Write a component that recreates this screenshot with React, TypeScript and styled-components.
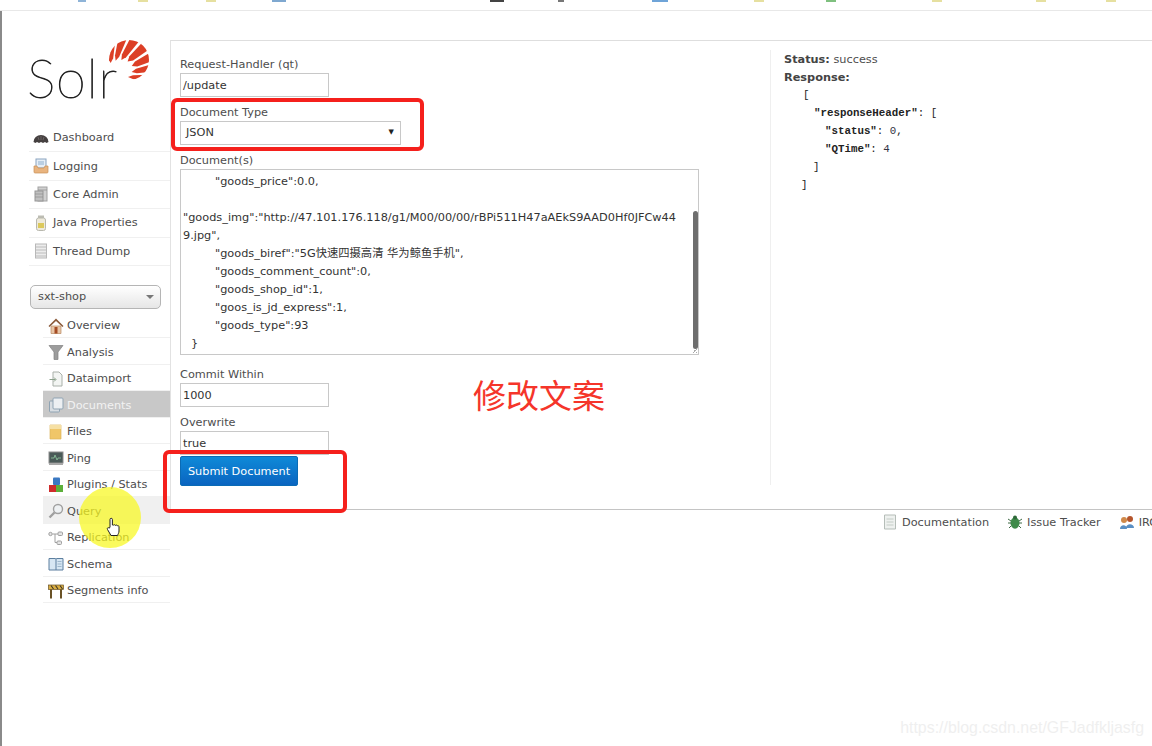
import type { ReactNode } from "react";
import styled, { createGlobalStyle } from "styled-components";

const GlobalStyle = createGlobalStyle`
  html, body {
    margin: 0;
    padding: 0;
    background: #fff;
  }
  body {
    font-family: "DejaVu Sans", "Noto Sans CJK SC", sans-serif;
    font-size: 11.3px;
    color: #4d4d4d;
  }
`;

const Screen = styled.div`
  position: relative;
  width: 1152px;
  height: 746px;
  overflow: hidden;
`;

const BookmarkBar = styled.div`
  height: 10px;
  border-bottom: 1px solid #e8e8e8;
`;

const Page = styled.div`
  display: flex;
  height: 735px;
  padding-top: 29px;
  box-sizing: border-box;
  border-left: 2px solid #8a8a8a;
`;

const Sidebar = styled.aside`
  width: 168px;
  flex: none;
  padding-left: 27px;
  box-sizing: border-box;
`;

const Logo = styled.div`
  position: relative;
  height: 62px;
  width: 125px;
`;

const LogoWord = styled.span`
  position: absolute;
  left: -2px;
  top: 9px;
  font-family: "Lato", sans-serif;
  font-weight: 100;
  font-size: 54px;
  line-height: 58px;
  letter-spacing: 0.8px;
  color: #222;
  -webkit-text-stroke: 0.8px #222;
`;

const LogoSun = styled.svg`
  position: absolute;
  left: 79px;
  top: -1px;
`;

const MainNav = styled.nav`
  margin-top: 22px;
`;

const MainItem = styled.div`
  display: flex;
  align-items: center;
  gap: 4px;
  height: 28.4px;
  padding-left: 4px;
  border-bottom: 1px solid #f0f0f0;
  box-sizing: border-box;
  color: #4d4d4d;
`;

const CoreSelect = styled.div`
  display: flex;
  align-items: center;
  justify-content: space-between;
  width: 131px;
  height: 24px;
  margin: 19px 0 3px 1px;
  padding: 0 6px 0 7px;
  box-sizing: border-box;
  border: 1px solid #b5b5b5;
  border-radius: 5px;
  background: linear-gradient(#ffffff, #e6e6e6);
`;

const CoreArrow = styled.span`
  width: 0;
  height: 0;
  border-left: 4px solid transparent;
  border-right: 4px solid transparent;
  border-top: 4px solid #777;
`;

const CoreNav = styled.nav`
  margin-left: 14px;
`;

const CoreItem = styled.div<{ $state?: "active" | "hover" }>`
  display: flex;
  align-items: center;
  gap: 3px;
  height: 26.5px;
  padding: 2px 0 0 5px;
  box-sizing: border-box;
  border-bottom: 1px solid #f0f0f0;
  background: ${(p) =>
    p.$state === "active" ? "#c8c8c8" : p.$state === "hover" ? "#f0f0f0" : "transparent"};
  color: ${(p) => (p.$state === "active" ? "#f2f2f2" : "#4d4d4d")};
`;

const RightColumn = styled.div`
  flex: 1;
  min-width: 0;
  display: flex;
  flex-direction: column;
`;

const Content = styled.main`
  display: flex;
  height: 469px;
  flex: none;
  box-sizing: border-box;
  border-top: 1px solid #dedede;
  border-left: 1px solid #e2e2e2;
`;

const DocsForm = styled.form`
  width: 599px;
  flex: none;
  padding: 15px 0 0 9px;
  box-sizing: border-box;
`;

const Field = styled.div`
  margin-bottom: 7px;
`;

const FieldLabel = styled.label`
  display: block;
  height: 17px;
  line-height: 17px;
`;

const TextInput = styled.div<{ $width?: number }>`
  width: ${(p) => p.$width ?? 149}px;
  height: 24px;
  line-height: 23px;
  padding-left: ${(p) => (p.$width ? 5 : 2)}px;
  box-sizing: border-box;
  border: 1px solid #c8c8c8;
  color: #333;
`;

const SelectBox = styled(TextInput)`
  display: flex;
  align-items: center;
  justify-content: space-between;
  padding-right: 6px;
  padding-bottom: 2px;
`;

const SelectArrow = styled.span`
  font-size: 7px;
  color: #222;
`;

const DocumentArea = styled.div`
  position: relative;
  width: 519px;
  height: 186px;
  margin-bottom: 11px;
  padding: 3px 8px 0 2px;
  box-sizing: border-box;
  border: 1px solid #c8c8c8;
  overflow: hidden;
  color: #333;
`;

const DocLine = styled.div<{ $indent?: number }>`
  height: 18px;
  line-height: 18px;
  padding-left: ${(p) => p.$indent ?? 0}px;
  white-space: nowrap;
`;

const ScrollThumb = styled.div`
  position: absolute;
  right: 0;
  top: 41px;
  width: 5px;
  height: 138px;
  border-radius: 3px;
  background: #6e6e6e;
`;

const ResizeGrip = styled.div`
  position: absolute;
  right: 1px;
  bottom: 1px;
  width: 5px;
  height: 5px;
  background: linear-gradient(135deg, transparent 50%, #aaa 50%, #aaa 62%, transparent 62%, transparent 80%, #aaa 80%);
`;

const SubmitButton = styled.button`
  display: block;
  width: 118px;
  height: 30px;
  margin-top: -6px;
  padding: 0;
  border: 1px solid #0a6bb5;
  border-radius: 2px;
  background: linear-gradient(#0f8ad8, #0a64c0);
  color: #fff;
  font: inherit;
`;

const ResponsePane = styled.section`
  flex: 1;
  height: 435px;
  margin-top: 9px;
  padding-left: 13px;
  border-left: 1px solid #efefef;
`;

const StatusLine = styled.div`
  height: 18px;
  line-height: 20px;
  b {
    color: #444;
  }
`;

const JsonLine = styled.div<{ $indent: number }>`
  height: 18px;
  line-height: 18px;
  padding-left: ${(p) => p.$indent}px;
  font-family: "Liberation Mono", monospace;
  font-size: 10.8px;
  white-space: pre;
  color: #222;
  i {
    font-style: normal;
    color: #334;
  }
`;

const Footer = styled.footer`
  height: 26px;
  flex: none;
  box-sizing: border-box;
  border-top: 1px solid #c4c4c4;
  display: flex;
  align-items: center;
  padding: 0 0 1px 712px;
  gap: 18px;
  white-space: nowrap;
`;

const FooterLink = styled.span`
  flex: none;
  display: inline-flex;
  align-items: center;
  gap: 4px;
`;

const RedBox = styled.div<{ $l: number; $t: number; $w: number; $h: number }>`
  position: absolute;
  left: ${(p) => p.$l}px;
  top: ${(p) => p.$t}px;
  width: ${(p) => p.$w}px;
  height: ${(p) => p.$h}px;
  box-sizing: border-box;
  border: 4px solid #f5201c;
  border-radius: 6px;
`;

const RedNote = styled.div`
  position: absolute;
  left: 473px;
  top: 375px;
  font-family: "Noto Sans CJK SC", sans-serif;
  font-size: 33px;
  line-height: 38px;
  color: #f5352a;
`;

const CursorHalo = styled.div`
  position: absolute;
  left: 79px;
  top: 487px;
  width: 62px;
  height: 61px;
  border-radius: 50%;
  background: rgba(248, 248, 30, 0.72);
`;

const CursorHand = styled.svg`
  position: absolute;
  left: 106px;
  top: 517px;
`;

const Watermark = styled.div`
  position: absolute;
  right: 8px;
  top: 719px;
  font-family: "Liberation Sans", sans-serif;
  font-size: 15.9px;
  color: #efefef;
`;

const BookmarkMark = styled.span<{ $l: number; $c: string; $w?: number }>`
  position: absolute;
  left: ${(p) => p.$l}px;
  top: 0;
  width: ${(p) => p.$w ?? 10}px;
  height: 2px;
  background: ${(p) => p.$c};
`;

const IconSvg = styled.svg`
  flex: none;
  filter: blur(0.3px);
`;

const Ic = ({ children }: { children: ReactNode }) => (
  <IconSvg width="16" height="16" viewBox="0 0 16 16">{children}</IconSvg>
);

const icons: Record<string, ReactNode> = {
  dashboard: (
    <>
      <path d="M0.500 12a7.500 7 0 0 1 15 0l-2 1-1.500-1-2 1-2-1-2 1-2-1-1.500 1z" fill="#454040" />
      <path d="M8 6v4M5 7l1 3M11 7l-1 3" stroke="#7a7272" strokeWidth="0.700" />
    </>
  ),
  logging: (
    <>
      <rect x="3" y="1" width="10" height="9" fill="#e6eef6" stroke="#8aa4c0" />
      <path d="M5 4h6M5 6h6" stroke="#8fb0cf" />
      <path d="M1 8h3l1 2h6l1-2h3v6a1 1 0 0 1-1 1H2a1 1 0 0 1-1-1z" fill="#e9b47f" stroke="#c98f57" strokeWidth="0.700" />
    </>
  ),
  core: (
    <>
      <rect x="5" y="1" width="9" height="14" fill="#d0d0d0" stroke="#a2a2a2" />
      <rect x="2" y="5" width="8" height="10" fill="#c0c0c0" stroke="#969696" />
      <path d="M2 8h8M2 11h8M5 4h9" stroke="#8c8c8c" strokeWidth="0.700" />
    </>
  ),
  java: (
    <>
      <rect x="5" y="0.500" width="6" height="2.500" fill="#bdbdb4" />
      <rect x="3.500" y="3" width="9" height="12.500" rx="2" fill="#eeeadb" stroke="#b8b8ae" />
      <rect x="5" y="8" width="6" height="5" fill="#dcc95c" />
    </>
  ),
  thread: (
    <>
      <rect x="2.500" y="1" width="11" height="14" fill="#ececec" stroke="#b8b8b8" />
      <path d="M3 4h10M3 7h10M3 10h10M3 13h10" stroke="#bcbcbc" />
    </>
  ),
  overview: (
    <>
      <path d="M3 8h10v7.500H3z" fill="#e8c6a8" stroke="#b98a62" strokeWidth="0.700" />
      <path d="M8 0.500L0.500 8l1 1L8 3l6.500 6 1-1z" fill="#8a5a3a" />
      <rect x="6.500" y="9" width="3" height="6.500" fill="#a44c24" />
    </>
  ),
  analysis: (
    <path d="M1 1.500h14l-5 6.500v7.500H6V8z" fill="#9c9c9c" stroke="#828282" strokeWidth="0.700" />
  ),
  dataimport: (
    <>
      <path d="M5 1h6l3 3v11H5z" fill="#f3f5f3" stroke="#a9b0a9" />
      <path d="M1.500 8.500h6M6 6.500l2 2-2 2" stroke="#8aa08a" fill="none" />
    </>
  ),
  documents: (
    <>
      <rect x="1.500" y="4" width="10" height="11" rx="1" fill="#d8dde2" stroke="#8fa3b3" />
      <rect x="5" y="1" width="10" height="11" rx="1" fill="#eceff2" stroke="#8fa3b3" />
    </>
  ),
  files: (
    <>
      <path d="M2 1h11v14H2z" fill="#f0c668" stroke="#dcb45c" strokeWidth="0.700" />
      <path d="M2 1h11v4H2z" fill="#f6e0a4" />
    </>
  ),
  ping: (
    <>
      <rect x="1" y="2" width="14" height="11" fill="#4a5a58" stroke="#8d8d8d" />
      <path d="M3 8h3l1-3 2 5 1-2h3" stroke="#8fc9a0" fill="none" strokeWidth="0.800" />
      <rect x="1" y="13" width="14" height="2" fill="#a8a8a8" />
    </>
  ),
  plugins: (
    <>
      <rect x="5" y="0.500" width="7" height="7.500" rx="1" fill="#3a78c2" />
      <rect x="1" y="8" width="7" height="7" fill="#cf2b2b" />
      <rect x="8" y="8" width="7" height="7" fill="#5caf3a" />
    </>
  ),
  query: (
    <>
      <circle cx="10" cy="6" r="4.500" fill="#eef1f3" stroke="#a0a0a0" strokeWidth="1.400" />
      <path d="M6.500 9.500l-5 5" stroke="#a0a0a0" strokeWidth="2.400" />
    </>
  ),
  replication: (
    <>
      <circle cx="2.500" cy="4" r="1.700" fill="#e4e4e4" stroke="#a0a0a0" />
      <rect x="10" y="2" width="4.500" height="3.500" rx="1" fill="#e4e4e4" stroke="#a0a0a0" />
      <rect x="9" y="11" width="4.500" height="3.500" rx="1" fill="#e4e4e4" stroke="#a0a0a0" />
      <path d="M4.500 4H7v8.500h2M7 4h3" stroke="#a0a0a0" fill="none" />
    </>
  ),
  schema: (
    <>
      <path d="M1 2.500h6.500l.5 1 .5-1H15v11.500H1z" fill="#d6e6f3" stroke="#5c7f9f" />
      <path d="M8 3.500V14" stroke="#5c7f9f" />
      <path d="M9.500 5.500h4M9.500 8h4M9.500 10.500h4" stroke="#9db7cc" />
    </>
  ),
  segments: (
    <>
      <path d="M3 6v9.500M13 6v9.500" stroke="#6a5226" strokeWidth="2" />
      <rect x="0.500" y="2" width="15" height="4.500" fill="#d9ae42" stroke="#6a5226" strokeWidth="0.700" />
      <path d="M3 2.500l2.500 3.500M7.500 2.500l2.500 3.500M12 2.500l2.500 3.500" stroke="#3a3226" strokeWidth="1.100" />
    </>
  ),
  doc: (
    <>
      <path d="M2.500 1h11v14h-11z" fill="#eef1ef" stroke="#b5bdb8" />
      <path d="M4.500 5h7M4.500 8h7M4.500 11h7" stroke="#c4ccc6" />
    </>
  ),
  bug: (
    <>
      <ellipse cx="8" cy="9" rx="4.500" ry="5.800" fill="#3f8a4a" />
      <circle cx="8" cy="3.500" r="2" fill="#2f6a3a" />
      <path d="M1 5l3 2M15 5l-3 2M1 9h3M15 9h-3M2 14l2-2M14 14l-2-2" stroke="#3f6a45" />
    </>
  ),
  irc: (
    <>
      <circle cx="5" cy="6" r="3" fill="#d08a4a" />
      <circle cx="11" cy="5" r="3" fill="#b5552c" />
      <path d="M1 15c0-5 7-5 7 0zM7 14c0-5 8-5 8 0z" fill="#5a8fc4" />
    </>
  ),
};

const mainMenu = [
  ["dashboard", "Dashboard"],
  ["logging", "Logging"],
  ["core", "Core Admin"],
  ["java", "Java Properties"],
  ["thread", "Thread Dump"],
];

const coreMenu = [
  ["overview", "Overview"],
  ["analysis", "Analysis"],
  ["dataimport", "Dataimport"],
  ["documents", "Documents"],
  ["files", "Files"],
  ["ping", "Ping"],
  ["plugins", "Plugins / Stats"],
  ["query", "Query"],
  ["replication", "Replication"],
  ["schema", "Schema"],
  ["segments", "Segments info"],
];

const marks: [number, string, number?][] = [
  [78, "#8fb4d8", 8],
  [138, "#e6e0a0"],
  [206, "#e6e0a0"],
  [272, "#7fa8d0", 14],
  [490, "#444", 14],
  [558, "#777", 6],
  [652, "#6fa4d8", 16],
  [754, "#e6e0a0"],
  [826, "#7fc07f"],
  [932, "#e6e0a0"],
  [1036, "#e6e0a0"],
  [1106, "#e6e0a0"],
];

// wedge angles (deg) and where the tip starts, measured from the rays' focus
const sunWedges = [
  [-8, 2, 17],
  [6, 16, 21],
  [20, 31, 23],
  [35, 47, 22],
  [51, 63, 19],
  [67, 79, 16],
  [83, 100, 13],
];

const wedgePoints = ([a1, a2, tip]: number[]) => {
  const fx = 3;
  const fy = 37;
  const at = (deg: number, r: number) => {
    const rad = (deg * Math.PI) / 180;
    return `${fx + r * Math.cos(rad)},${fy - r * Math.sin(rad)}`;
  };
  return [
    at((a1 + a2) / 2, tip),
    at(a1, tip + 5),
    at(a1, 70),
    at(a2, 70),
    at(a2, tip + 5),
  ].join(" ");
};

export default function App() {
  return (
    <Screen>
      <GlobalStyle />
      <BookmarkBar>
        {marks.map(([l, c, w]) => (
          <BookmarkMark key={l} $l={l} $c={c} $w={w} />
        ))}
      </BookmarkBar>
      <Page>
        <Sidebar>
          <Logo>
            <LogoSun width="44" height="44" viewBox="0 0 44 44">
              <defs>
                <clipPath id="sunDisc">
                  <circle cx="21" cy="21" r="20" />
                </clipPath>
              </defs>
              <g clipPath="url(#sunDisc)" fill="#dc3f26">
                {sunWedges.map((w) => (
                  <polygon key={w[0]} points={wedgePoints(w)} />
                ))}
              </g>
            </LogoSun>
            <LogoWord>Solr</LogoWord>
          </Logo>
          <MainNav>
            {mainMenu.map(([icon, label]) => (
              <MainItem key={label}>
                <Ic>{icons[icon]}</Ic>
                {label}
              </MainItem>
            ))}
          </MainNav>
          <CoreSelect>
            sxt-shop
            <CoreArrow />
          </CoreSelect>
          <CoreNav>
            {coreMenu.map(([icon, label]) => (
              <CoreItem
                key={label}
                $state={label === "Documents" ? "active" : label === "Query" ? "hover" : undefined}
              >
                <Ic>{icons[icon]}</Ic>
                {label}
              </CoreItem>
            ))}
          </CoreNav>
        </Sidebar>
        <RightColumn>
          <Content>
            <DocsForm>
              <Field>
                <FieldLabel>Request-Handler (qt)</FieldLabel>
                <TextInput>/update</TextInput>
              </Field>
              <Field>
                <FieldLabel>Document Type</FieldLabel>
                <SelectBox $width={221}>
                  JSON
                  <SelectArrow>▼</SelectArrow>
                </SelectBox>
              </Field>
              <FieldLabel>Document(s)</FieldLabel>
              <DocumentArea>
                <DocLine $indent={32}>"goods_price":0.0,</DocLine>
                <DocLine>&nbsp;</DocLine>
                <DocLine>"goods_img":"http://47.101.176.118/g1/M00/00/00/rBPi511H47aAEkS9AAD0Hf0JFCw44</DocLine>
                <DocLine>9.jpg",</DocLine>
                <DocLine $indent={32}>"goods_biref":"5G快速四摄高清 华为鲸鱼手机",</DocLine>
                <DocLine $indent={32}>"goods_comment_count":0,</DocLine>
                <DocLine $indent={32}>"goods_shop_id":1,</DocLine>
                <DocLine $indent={32}>"goos_is_jd_express":1,</DocLine>
                <DocLine $indent={32}>"goods_type":93</DocLine>
                <DocLine $indent={8}>{"}"}</DocLine>
                <ScrollThumb />
                <ResizeGrip />
              </DocumentArea>
              <Field>
                <FieldLabel>Commit Within</FieldLabel>
                <TextInput>1000</TextInput>
              </Field>
              <Field>
                <FieldLabel>Overwrite</FieldLabel>
                <TextInput>true</TextInput>
              </Field>
              <SubmitButton type="button">Submit Document</SubmitButton>
            </DocsForm>
            <ResponsePane>
              <StatusLine>
                <b>Status:</b> success
              </StatusLine>
              <StatusLine>
                <b>Response:</b>
              </StatusLine>
              <JsonLine $indent={19}>[</JsonLine>
              <JsonLine $indent={30}>
                <b>"responseHeader"</b>: [
              </JsonLine>
              <JsonLine $indent={41}>
                <b>"status"</b>: <i>0</i>,
              </JsonLine>
              <JsonLine $indent={41}>
                <b>"QTime"</b>: <i>4</i>
              </JsonLine>
              <JsonLine $indent={29}>]</JsonLine>
              <JsonLine $indent={17}>]</JsonLine>
            </ResponsePane>
          </Content>
          <Footer>
            <FooterLink>
              <Ic>{icons.doc}</Ic>
              Documentation
            </FooterLink>
            <FooterLink>
              <Ic>{icons.bug}</Ic>
              Issue Tracker
            </FooterLink>
            <FooterLink>
              <Ic>{icons.irc}</Ic>
              IRC
            </FooterLink>
          </Footer>
        </RightColumn>
      </Page>
      <RedBox $l={171} $t={98} $w={253} $h={53} />
      <RedBox $l={163} $t={450} $w={184} $h={63} />
      <RedNote>修改文案</RedNote>
      <CursorHalo />
      <CursorHand width="14" height="20" viewBox="0 0 14 20">
        <path
          d="M4 10V2.500a1.200 1.200 0 0 1 2.400 0V8l1 .2a1.100 1.100 0 0 1 2 .3 1.100 1.100 0 0 1 2 .4 1 1 0 0 1 1.600.8V14c0 2-1 3-1.500 4.500H5L1.500 12.500c-.8-1.500.8-2.500 1.800-1.300z"
          fill="#fff"
          stroke="#222"
          strokeWidth="1"
        />
      </CursorHand>
      <Watermark>https://blog.csdn.net/GFJadfkljasfg</Watermark>
    </Screen>
  );
}
